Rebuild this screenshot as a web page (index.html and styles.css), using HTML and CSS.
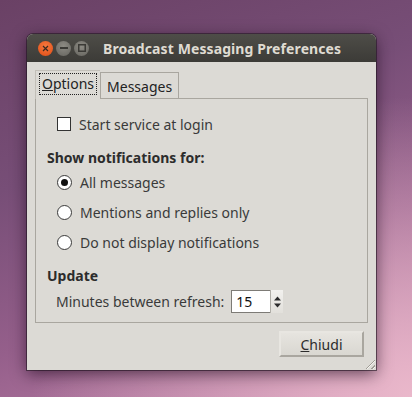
FILE: index.html
```html
<!DOCTYPE html>
<html>
<head>
  <meta charset="utf-8">
  <link rel="stylesheet" href="styles.css">
</head>
<body>
  <div class="window">
    <div class="titlebar">
      <div class="wm-buttons">
        <span class="wm-btn wm-close">
          <svg width="7" height="7" viewBox="0 0 7 7"><path d="M1 1L6 6M6 1L1 6" stroke="#3a2a20" stroke-width="1.2"/></svg>
        </span>
        <span class="wm-btn wm-min">
          <svg width="8" height="2" viewBox="0 0 8 2"><rect width="8" height="2" fill="#3b3a36"/></svg>
        </span>
        <span class="wm-btn wm-max">
          <svg width="8" height="8" viewBox="0 0 8 8"><rect x="0.75" y="0.75" width="6.5" height="6.5" fill="none" stroke="#3b3a36" stroke-width="1.5"/></svg>
        </span>
      </div>
      <span class="title">Broadcast Messaging Preferences</span>
    </div>

    <div class="content">
      <div class="tabs">
        <div class="tab active"><span class="focus"><u>O</u>ptions</span></div>
        <div class="tab">Messages</div>
      </div>

      <div class="panel">
        <div class="row indent">
          <span class="checkbox"></span>
          <span>Start service at login</span>
        </div>

        <div class="row heading">Show notifications for:</div>
        <div class="row indent radio-row">
          <span class="radio checked"></span>
          <span>All messages</span>
        </div>
        <div class="row indent radio-row">
          <span class="radio"></span>
          <span>Mentions and replies only</span>
        </div>
        <div class="row indent radio-row">
          <span class="radio"></span>
          <span>Do not display notifications</span>
        </div>

        <div class="row heading">Update</div>
        <div class="row refresh">
          <span>Minutes between refresh:</span>
          <span class="spin">
            <span class="spin-value">15</span>
            <span class="spin-arrows">
              <svg width="7" height="14" viewBox="0 0 7 14"><path d="M0 5.5L3.5 1.5L7 5.5Z M0 8.5L3.5 12.5L7 8.5Z" fill="#2c2c2c"/></svg>
            </span>
          </span>
        </div>
      </div>

      <div class="actions">
        <button class="btn"><u>C</u>hiudi</button>
      </div>
      <span class="grip"></span>
    </div>
  </div>
</body>
</html>
```

FILE: styles.css
```css
body {
  margin: 0;
  width: 412px;
  height: 397px;
  padding: 34px 0 0 27px;
  box-sizing: border-box;
  overflow: hidden;
  font-family: "Noto Sans", "Open Sans", sans-serif;
  font-size: 14px;
  color: #3a3a3a;
  background:
    radial-gradient(ellipse 380px 300px at 100% 100%, #eab8cb 0%, rgba(234,184,203,0) 100%),
    linear-gradient(160deg, #6a4165 0%, #774e77 35%, #955f8b 65%, #c285aa 100%);
}

.window {
  width: 349px;
  background: #dcdad5;
  border-radius: 6px 6px 0 0;
  box-shadow: 0 4px 16px rgba(20, 0, 20, 0.6), 0 0 0 1px rgba(40, 30, 40, 0.6);
}

.titlebar {
  height: 28px;
  display: flex;
  align-items: center;
  padding-left: 11px;
  border-radius: 6px 6px 0 0;
  background: linear-gradient(#4e4d48, #3c3b37);
}

.wm-buttons {
  display: flex;
  gap: 3px;
}

.wm-btn {
  width: 15px;
  height: 15px;
  border-radius: 50%;
  display: flex;
  align-items: center;
  justify-content: center;
}

.wm-close {
  background: radial-gradient(circle at 50% 35%, #f8793f, #de4c14);
}

.wm-min, .wm-max {
  background: radial-gradient(circle at 50% 35%, #8d8b84, #65645e);
}

.title {
  margin-left: 14px;
  font-weight: bold;
  font-size: 14px;
  color: #dfdbd2;
  letter-spacing: 0.1px;
}

.content {
  position: relative;
  padding: 8px 8px 13px 8px;
}

.tabs {
  display: flex;
  align-items: flex-end;
  height: 29px;
  margin-bottom: -1px;
  position: relative;
}

.tab {
  height: 27px;
  padding: 0 6px;
  display: flex;
  align-items: center;
  border: 1px solid #a9a69f;
  border-bottom: none;
  color: #222;
  box-sizing: border-box;
}

.tab.active {
  height: 29px;
  padding: 0 3px;
  background: #dcdad5;
  border-color: #c2bfb8;
  border-right: none;
  padding-bottom: 2px;
}

.focus {
  border: 1px dotted #222;
  padding: 1px 2px;
  line-height: 18px;
}

.panel {
  height: 225px;
  border: 1px solid #a9a69f;
  box-sizing: border-box;
  padding: 15px 11px 0 11px;
  display: flex;
  flex-direction: column;
}

.row {
  display: flex;
  align-items: center;
  height: 20px;
  gap: 8px;
}

.indent {
  padding-left: 10px;
}

.heading {
  font-weight: bold;
  color: #2c2c2c;
  margin-top: 13px;
}

.heading + .radio-row {
  margin-top: 5px;
}

.radio-row + .radio-row {
  margin-top: 10px;
}

.checkbox {
  width: 14px;
  height: 14px;
  border: 1px solid #333;
  background: #fff;
  box-sizing: border-box;
}

.radio {
  width: 15px;
  height: 15px;
  border: 1px solid #3a3a3a;
  border-radius: 50%;
  background: #fff;
  box-sizing: border-box;
  display: flex;
  align-items: center;
  justify-content: center;
}

.radio.checked::after {
  content: "";
  width: 7px;
  height: 7px;
  border-radius: 50%;
  background: #111;
}

.refresh {
  height: 23px;
  margin-top: 5px;
  padding-left: 9px;
  gap: 7px;
}

.spin {
  display: flex;
  height: 23px;
}

.spin-value {
  width: 39px;
  box-sizing: border-box;
  border: 1px solid #7d7b76;
  border-right: none;
  background: #fff;
  padding-left: 4px;
  display: flex;
  align-items: center;
  color: #111;
}

.spin-arrows {
  width: 12px;
  background: linear-gradient(#f2f1ee, #e2e0db);
  border-left: 1px solid #b0aea8;
  display: flex;
  align-items: center;
  justify-content: center;
}

.actions {
  display: flex;
  justify-content: flex-end;
  padding: 8px 4px 0 0;
}

.btn {
  width: 85px;
  height: 26px;
  font-family: inherit;
  font-size: 14px;
  color: #2c2c2c;
  background: linear-gradient(#e6e4df, #d9d7d1);
  border: 2px solid #a9a69f;
  border-top-color: #e8e6e1;
  border-left-color: #e8e6e1;
  padding: 0;
}

.grip {
  position: absolute;
  right: 1px;
  bottom: 1px;
  width: 12px;
  height: 12px;
  background: repeating-linear-gradient(135deg, transparent 0 2px, #9f9c95 2px 3px, #f4f3f0 3px 4px);
  clip-path: polygon(100% 0, 100% 100%, 0 100%);
}
```
